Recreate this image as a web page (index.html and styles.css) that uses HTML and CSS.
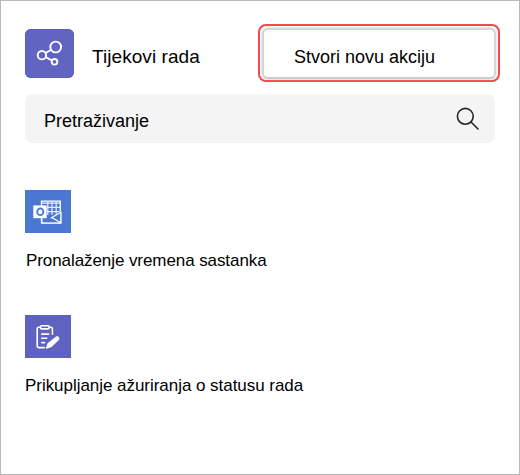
FILE: index.html
```html
<!DOCTYPE html>
<html lang="hr">
<head>
<meta charset="utf-8">
<title>Tijekovi rada</title>
<link rel="stylesheet" href="styles.css">
</head>
<body>
<main class="panel">
  <header class="header">
    <svg class="logo" viewBox="0 0 49 49" fill="none" stroke="#fff" stroke-width="1.9">
      <circle cx="30.7" cy="18" r="5.4"/>
      <circle cx="16.9" cy="26.2" r="4.2"/>
      <circle cx="29.5" cy="32.8" r="2.8"/>
      <path d="M20.6 24l5.5-3.3M20.8 28.2l6.1 3.3"/>
    </svg>
    <h1 class="title">Tijekovi rada</h1>
    <div class="highlight"><button class="create">Stvori novu akciju</button></div>
  </header>
  <div class="search">
    <span class="search-label">Pretraživanje</span>
    <svg class="search-icon" viewBox="0 0 24 24" fill="none" stroke="#262626" stroke-width="1.6" stroke-linecap="round">
      <circle cx="9.3" cy="9.3" r="7.9"/>
      <path d="M15 15l7 7"/>
    </svg>
  </div>
  <section class="actions">
    <article class="action">
      <svg class="tile tile-blue" viewBox="0 0 46 43">
        <path d="M16.5 11.2h18.8v21.4H16.5z" fill="none" stroke="#fff" stroke-width="1.3"/>
        <path d="M22.8 12v13M27 12v13M31.2 12v13M17 13.2h18M22 17.4h13M22 21.6h13" fill="none" stroke="#e6efff" stroke-width="1.2"/>
        <path d="M20 25l6 2.5 9.5-6.5v11.7H17z" fill="#4a78d0"/>
        <path d="M36 21.5v11.6H16.8v-4.6M35.7 22.3l-10 6M26.8 27.5l9 5.2" fill="none" stroke="#fff" stroke-width="1.3"/>
        <path d="M8.3 15.4h13.4v12.8H8.3z" fill="#fff"/>
        <ellipse cx="15.3" cy="21.8" rx="3.1" ry="3.4" fill="none" stroke="#4a78d0" stroke-width="1.8"/>
      </svg>
      <span class="action-name">Pronalaženje vremena sastanka</span>
    </article>
    <article class="action">
      <svg class="tile tile-purple" viewBox="0 0 46 43" fill="none" stroke="#fff" stroke-width="1.6" stroke-linecap="round" stroke-linejoin="round">
        <path d="M15.2 12.2h-1.4q-1.6 0-1.6 1.6v17.2q0 1.6 1.6 1.6h5.6M24.3 12.2h1.5q1.6 0 1.6 1.6v5.4"/>
        <rect x="15.4" y="10.7" width="8.8" height="3.2" rx="1.4"/>
        <path d="M16.7 19.1h7M16.7 23.3h5M16.7 27.6h3"/>
        <path d="M21.5 33.2l1.5-4.5 8.1-6.6q1.6-.7 2.4.4.8 1.2-.2 2.3l-7.5 7z" fill="#fff" stroke-width="1.2"/>
      </svg>
      <span class="action-name action-name-status">Prikupljanje ažuriranja o statusu rada</span>
    </article>
  </section>
</main>
</body>
</html>
```
FILE: styles.css
```css
* { box-sizing: border-box; }
body {
  margin: 0;
  background: #fff;
  color: #000;
  font-family: "Liberation Sans", Arial, sans-serif;
}
.panel {
  height: 475px;
  padding: 23px 19px 0 24px;
  border: 1px solid #b9b9b9;
}
.header {
  display: flex;
  align-items: flex-start;
  height: 70px;
}
.logo {
  width: 49px;
  height: 49px;
  margin-top: 5px;
  border-radius: 6px;
  background: #6264c1;
  box-shadow: inset 0 0 0 1px #5b5db9;
}
.title {
  margin: 22px 0 0 18px;
  font-size: 19px;
  font-weight: 400;
  line-height: 22px;
  letter-spacing: 0.06px;
  white-space: nowrap;
}
.highlight {
  width: 242px;
  height: 58px;
  margin-left: auto;
  padding: 2px 2px 1px;
  border: 2px solid #f4484c;
  border-radius: 8px;
}
.create {
  display: block;
  width: 100%;
  height: 51px;
  padding: 7px 0 0 30px;
  border: 2px solid #d4d6d6;
  border-bottom-color: #cacccc;
  border-radius: 6px;
  background: #fff;
  box-shadow: 0 0 1px 1px #e8eaea;
  color: #000;
  font: 18px/22px "Liberation Sans", Arial, sans-serif;
  text-align: left;
}
.search {
  display: flex;
  align-items: center;
  justify-content: space-between;
  width: 470px;
  height: 49px;
  padding: 0 15px 0 19px;
  border-radius: 7px;
  background: #f4f4f4;
}
.search-label {
  padding-top: 4px;
  font-size: 18px;
  line-height: 22px;
}
.search-icon {
  width: 24px;
  height: 24px;
}
.actions {
  display: flex;
  flex-direction: column;
  gap: 44px;
  padding-top: 47px;
}
.action {
  display: flex;
  flex-direction: column;
  height: 81px;
}
.tile {
  width: 46px;
  height: 43px;
}
.tile-blue { background: #4a78d0; }
.tile-purple { background: #6062c2; }
.action-name {
  margin: 18px 0 0 1px;
  font-size: 17px;
  line-height: 20px;
  letter-spacing: -0.08px;
  white-space: nowrap;
}
.action-name-status {
  margin-left: 0;
  letter-spacing: -0.04px;
}
```
